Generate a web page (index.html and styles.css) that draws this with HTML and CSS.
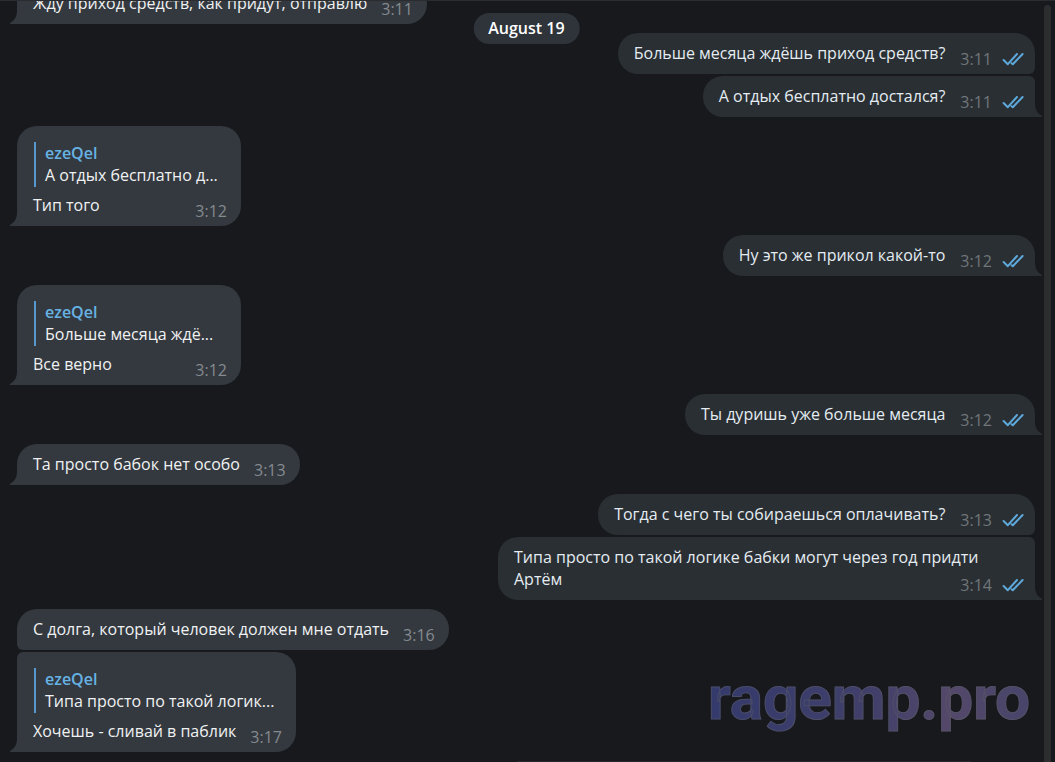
FILE: index.html
```html
<!DOCTYPE html>
<html lang="ru">
<head>
<meta charset="utf-8">
<meta name="viewport" content="width=device-width, initial-scale=1">
<title>Chat</title>
<link rel="stylesheet" href="styles.css">
</head>
<body>
<svg class="defs" aria-hidden="true">
  <symbol id="read" viewBox="0 0 22 14">
    <path d="M1.6 8 L5.8 12.2 L15 2 M9.6 11.2 L10.8 12.2 L20.6 2" fill="none" stroke="currentColor" stroke-width="2" stroke-linecap="round" stroke-linejoin="round"/>
  </symbol>
  <symbol id="tail" viewBox="0 0 8 14">
    <path d="M8 0 H7 C7 6 5 10 0 13 V14 H8 Z" fill="currentColor"/>
  </symbol>
</svg>
<div class="app">
  <main class="chat">
    <article class="msg in last">
      <p class="text">Жду приход средств, как придут, отправлю<span class="meta"><time>3:11</time></span></p>
      <svg class="tail"><use href="#tail"/></svg>
    </article>
    <article class="msg out first">
      <p class="text">Больше месяца ждёшь приход средств?<span class="meta"><time>3:11</time><svg class="read"><use href="#read"/></svg></span></p>
    </article>
    <article class="msg out last joined">
      <p class="text">А отдых бесплатно достался?<span class="meta"><time>3:11</time><svg class="read"><use href="#read"/></svg></span></p>
      <svg class="tail"><use href="#tail"/></svg>
    </article>
    <article class="msg in last">
      <blockquote class="reply"><b class="author">ezeQel</b><span>А отдых бесплатно д...</span></blockquote>
      <p class="text">Тип того<span class="meta"><time>3:12</time></span></p>
      <svg class="tail"><use href="#tail"/></svg>
    </article>
    <article class="msg out last">
      <p class="text">Ну это же прикол какой-то<span class="meta"><time>3:12</time><svg class="read"><use href="#read"/></svg></span></p>
      <svg class="tail"><use href="#tail"/></svg>
    </article>
    <article class="msg in last">
      <blockquote class="reply"><b class="author">ezeQel</b><span>Больше месяца ждё...</span></blockquote>
      <p class="text">Все верно<span class="meta"><time>3:12</time></span></p>
      <svg class="tail"><use href="#tail"/></svg>
    </article>
    <article class="msg out last">
      <p class="text">Ты дуришь уже больше месяца<span class="meta"><time>3:12</time><svg class="read"><use href="#read"/></svg></span></p>
      <svg class="tail"><use href="#tail"/></svg>
    </article>
    <article class="msg in last">
      <p class="text">Та просто бабок нет особо<span class="meta"><time>3:13</time></span></p>
      <svg class="tail"><use href="#tail"/></svg>
    </article>
    <article class="msg out first">
      <p class="text">Тогда с чего ты собираешься оплачивать?<span class="meta"><time>3:13</time><svg class="read"><use href="#read"/></svg></span></p>
    </article>
    <article class="msg out last joined">
      <p class="text">Типа просто по такой логике бабки могут через год придти Артём<span class="meta"><time>3:14</time><svg class="read"><use href="#read"/></svg></span></p>
      <svg class="tail"><use href="#tail"/></svg>
    </article>
    <article class="msg in first">
      <p class="text">С долга, который человек должен мне отдать<span class="meta"><time>3:16</time></span></p>
    </article>
    <article class="msg in last joined">
      <blockquote class="reply"><b class="author">ezeQel</b><span>Типа просто по такой логик...</span></blockquote>
      <p class="text">Хочешь - сливай в паблик<span class="meta"><time>3:17</time></span></p>
      <svg class="tail"><use href="#tail"/></svg>
    </article>
  </main>
  <div class="scrollbar"></div>
  <div class="date">August 19</div>
  <div class="watermark">ragemp.pro</div>
</div>
</body>
</html>
```
FILE: styles.css
```css
* {
  box-sizing: border-box;
}

body {
  margin: 0;
  background: #18191d;
  color: #f0f1f2;
  font: 16px/22px "Open Sans", "Noto Sans", sans-serif;
}

.defs {
  display: none;
}

.app {
  position: relative;
  display: flex;
  height: 100vh;
  overflow: hidden;
  border-top: 1px solid #2a2c30;
}

.app::after {
  content: "";
  position: absolute;
  right: 8%;
  bottom: 0;
  left: 49%;
  height: 1px;
  background: #26272a;
}

.chat {
  flex: 1;
  display: flex;
  flex-direction: column;
  justify-content: flex-end;
  padding: 0 9px 10px 17px;
}

.msg {
  position: relative;
  flex: none;
  max-width: 537px;
  margin-top: 9px;
  padding: 9px 14px 10px 16px;
  border-radius: 20px;
}

.in {
  align-self: flex-start;
  background: #33393f;
  color: #f0f1f2;
}

.out {
  align-self: flex-end;
  padding-right: 11px;
  background: #2a2f33;
  color: #e4ecf2;
}

.joined {
  margin-top: 2px;
}

.in.first {
  border-bottom-left-radius: 6px;
}

.in.last {
  border-bottom-left-radius: 0;
}

.in.joined {
  border-top-left-radius: 6px;
}

.out.first {
  border-bottom-right-radius: 6px;
}

.out.last {
  border-bottom-right-radius: 0;
}

.out.joined {
  border-top-right-radius: 6px;
}

.text {
  margin: 0;
}

.meta {
  float: right;
  display: flex;
  gap: 10px;
  margin: 9px 0 -3px 14px;
  color: #858a8f;
  line-height: 16px;
}

.out .meta {
  margin-left: 15px;
  color: #70767a;
}

.read {
  width: 22px;
  height: 14px;
  margin-top: 1px;
  color: #5ea9dc;
}

.tail {
  position: absolute;
  bottom: 0;
  left: -7px;
  width: 8px;
  height: 14px;
  color: #33393f;
}

.out .tail {
  right: -7px;
  left: auto;
  color: #2a2f33;
  transform: scaleX(-1);
}

.reply {
  display: flex;
  flex-direction: column;
  min-width: 193px;
  height: 45px;
  margin: 7px 0 7px 1px;
  padding-left: 9px;
  border-left: 2px solid #5698cf;
}

.author {
  color: #67b2e3;
  font-weight: 600;
}

.scrollbar {
  width: 7px;
  margin: 4px 4px 0 0;
  border-radius: 4px 4px 0 0;
  background: #2c2d2f;
}

.date {
  position: absolute;
  top: 12px;
  left: 50%;
  padding: 4px 15px 5px;
  border-radius: 16px;
  background: #2e343a;
  color: #fff;
  font-weight: 600;
  transform: translateX(-51%);
}

.watermark {
  position: absolute;
  right: 25px;
  bottom: 28px;
  background: linear-gradient(90deg, #343a6c, #403f6a 50%, #54486a 75%, #47446a);
  background-clip: text;
  color: transparent;
  font: 700 62px/72px Roboto, sans-serif;
  -webkit-text-stroke: 1px #5c5e6480;
}
```
